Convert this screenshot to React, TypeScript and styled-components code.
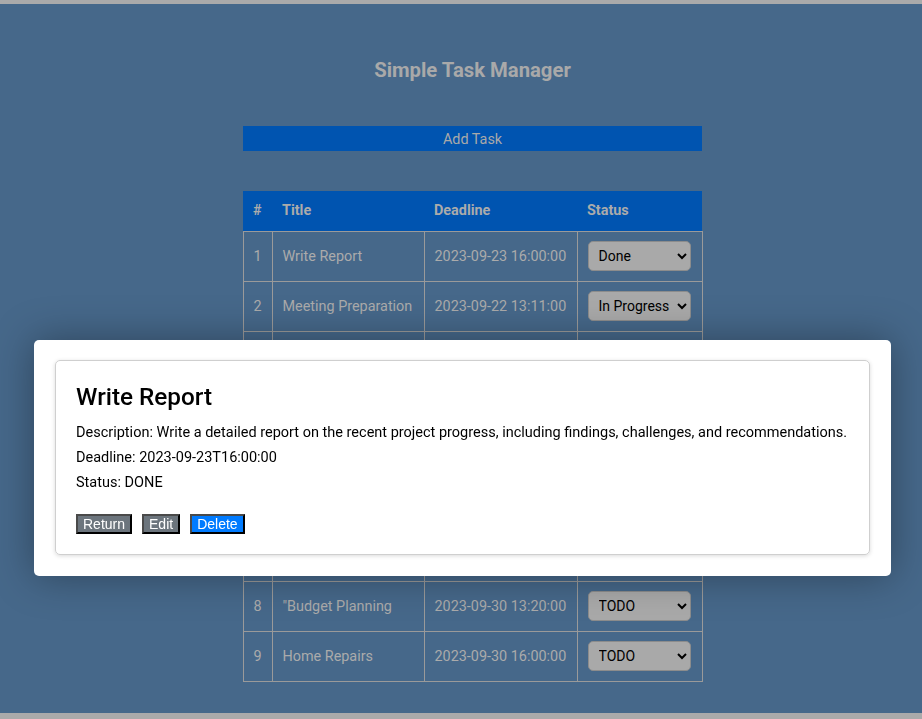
import React from "react";
import styled, { createGlobalStyle } from "styled-components";

const GlobalStyle = createGlobalStyle`
  html, body { margin: 0; padding: 0; background: #aaaaaa; }
  body { font-family: Roboto, "Noto Sans", sans-serif; overflow: hidden; }
  * { box-sizing: border-box; }
`;

const Page = styled.div`
  margin-top: 4px;
  background: #46688a;
  padding: 54px 0 31px 23px;
  display: flex;
  flex-direction: column;
  align-items: center;
`;

const Title = styled.h1`
  margin: 0 0 44px;
  font-size: 20.3px;
  line-height: 24px;
  font-weight: 700;
  color: #a9a9a9;
`;

const AddButton = styled.div`
  width: 459px;
  height: 25px;
  padding-top: 1px;
  background: #0054b0;
  color: #a9a9a9;
  font-size: 14.4px;
  display: flex;
  align-items: center;
  justify-content: center;
  margin-bottom: 40px;
`;

const Table = styled.table`
  width: 459px;
  border-collapse: collapse;
  table-layout: fixed;
  font-size: 14.4px;
  color: #ababab;
`;

const Th = styled.th<{ $w: number }>`
  width: ${(p) => p.$w}px;
  height: 40px;
  background: #0054b0;
  text-align: left;
  padding: 0 10px;
  font-weight: 700;
  border: none;
`;

const Td = styled.td`
  height: 50px;
  padding: 0 10px;
  border: 1px solid #9a9a9a;
  white-space: nowrap;
  overflow: hidden;
`;

const StatusSelect = styled.select`
  width: 103px;
  height: 30px;
  background-color: #a9a9a9;
  border: 1px solid #8c8c8c;
  border-radius: 5px;
  font-family: Roboto, "Noto Sans", sans-serif;
  font-size: 14px;
  color: #000;
  padding: 0 0 0 6px;
`;

const Modal = styled.div`
  position: fixed;
  top: 340px;
  left: 34px;
  width: 857px;
  background: #fff;
  border-radius: 5px;
  padding: 20px 21px 21px 21px;
  box-shadow: 0 0 40px rgba(0, 0, 0, 0.35);
`;

const Card = styled.div`
  border: 1px solid #cfcfcf;
  border-radius: 5px;
  box-shadow: 0 1px 4px rgba(0, 0, 0, 0.15);
  padding: 20px;
  color: #000;
`;

const CardTitle = styled.h2`
  margin: 0 0 7px;
  font-size: 24.3px;
  line-height: 32px;
  font-weight: 500;
`;

const Line = styled.p`
  margin: 0;
  font-size: 14.5px;
  line-height: 25px;
  white-space: nowrap;
`;

const Actions = styled.div`
  display: flex;
  gap: 10px;
  margin-top: 19px;
`;

const ActionButton = styled.button<{ $primary?: boolean }>`
  font-family: "Liberation Sans", Arial, sans-serif;
  font-size: 14px;
  line-height: 16px;
  padding: 0 5px;
  color: #fff;
  background: ${(p) => (p.$primary ? "#007bff" : "#6c757d")};
  border-width: 2px;
  border-style: solid;
  border-color: #4a4a4a #000 #000 #4a4a4a;
  border-radius: 0;
`;

const tasks = [
  { t: "Write Report", d: "2023-09-23 16:00:00", s: "Done" },
  { t: "Meeting Preparation", d: "2023-09-22 13:11:00", s: "In Progress" },
  { t: "Code Review", d: "2023-09-24 10:00:00", s: "TODO" },
  { t: "Grocery Shopping", d: "2023-09-25 18:00:00", s: "TODO" },
  { t: "Gym Session", d: "2023-09-26 07:30:00", s: "TODO" },
  { t: "Team Lunch", d: "2023-09-27 12:00:00", s: "TODO" },
  { t: "Client Call", d: "2023-09-28 15:00:00", s: "TODO" },
  { t: "\"Budget Planning", d: "2023-09-30 13:20:00", s: "TODO" },
  { t: "Home Repairs", d: "2023-09-30 16:00:00", s: "TODO" },
];

export default function App() {
  return (
    <>
      <GlobalStyle />
      <Page>
        <Title>Simple Task Manager</Title>
        <AddButton>Add Task</AddButton>
        <Table>
          <thead>
            <tr>
              <Th $w={29}>#</Th>
              <Th $w={152}>Title</Th>
              <Th $w={153}>Deadline</Th>
              <Th $w={125}>Status</Th>
            </tr>
          </thead>
          <tbody>
            {tasks.map((task, i) => (
              <tr key={i}>
                <Td>{i + 1}</Td>
                <Td>{task.t}</Td>
                <Td>{task.d}</Td>
                <Td>
                  <StatusSelect defaultValue={task.s}>
                    <option>TODO</option>
                    <option>In Progress</option>
                    <option>Done</option>
                  </StatusSelect>
                </Td>
              </tr>
            ))}
          </tbody>
        </Table>
      </Page>
      <Modal>
        <Card>
          <CardTitle>Write Report</CardTitle>
          <Line>
            Description: Write a detailed report on the recent project progress, including findings,
            challenges, and recommendations.
          </Line>
          <Line>Deadline: 2023-09-23T16:00:00</Line>
          <Line>Status: DONE</Line>
          <Actions>
            <ActionButton>Return</ActionButton>
            <ActionButton>Edit</ActionButton>
            <ActionButton $primary>Delete</ActionButton>
          </Actions>
        </Card>
      </Modal>
    </>
  );
}
